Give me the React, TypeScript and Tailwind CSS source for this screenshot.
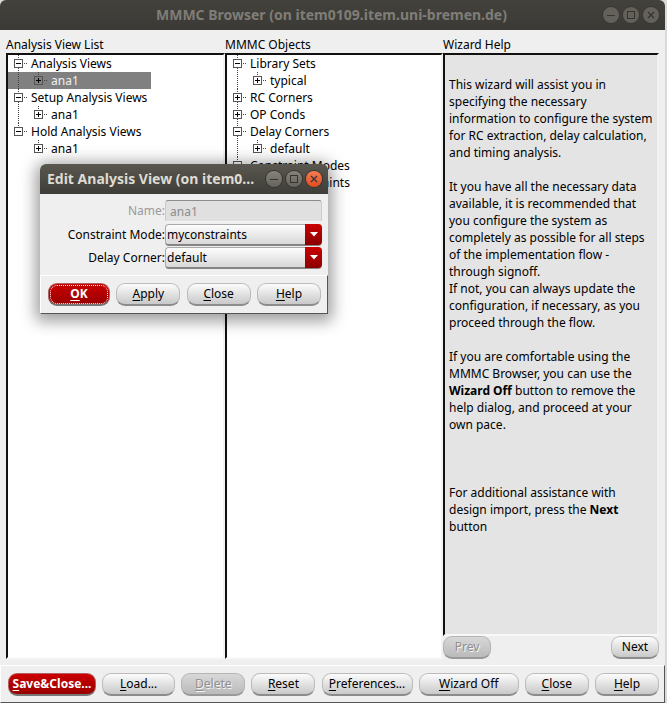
import React from 'react';

const FONT = "font-['Noto_Sans',sans-serif] text-xs";

type Node = { label: string; open?: boolean; children?: string[]; selected?: boolean };

function Branch({ open, depth, above, below }: { open?: boolean; depth: number; above: boolean; below: boolean }) {
  const c = depth === 0 ? 10 : 30;
  const dots = { stroke: '#444', strokeWidth: 1, strokeDasharray: '1 1' };
  return (
    <svg width={depth === 0 ? 23 : 43} height="17" className="shrink-0" shapeRendering="crispEdges" aria-hidden="true">
      {depth === 1 && below && <path d="M10.5 0V17" {...dots} />}
      {above && <path d={`M${c + 0.5} 0V4`} {...dots} />}
      {depth === 0 && below && <path d="M10.5 13V17" {...dots} />}
      <path d={`M${c + 6} 8.5h4`} {...dots} />
      <rect x={c - 3.5} y="4.5" width="8" height="8" fill="none" stroke="#555" />
      <path d={`M${c - 2} 8.5h5`} stroke="#000" />
      {!open && <path d={`M${c + 0.5} 6v5`} stroke="#000" />}
    </svg>
  );
}

function Tree({ nodes }: { nodes: Node[] }) {
  return (
    <ul>
      {nodes.map((n, i) => {
        const more = i < nodes.length - 1;
        return (
          <li key={n.label}>
            <div className="flex h-[17px] items-center leading-[17px]">
              <Branch depth={0} open={n.open} above below={more} />
              <span className="whitespace-nowrap">{n.label}</span>
            </div>
            {n.children && (
              <ul>
                {n.children.map((c) => (
                  <li
                    key={c}
                    className={
                      n.selected
                        ? 'flex h-[17px] w-[143px] items-center bg-[#808080] leading-[17px] text-[#f0f0f0]'
                        : 'flex h-[17px] items-center leading-[17px]'
                    }
                  >
                    <Branch depth={1} above below={more} />
                    <span className="whitespace-nowrap">{c}</span>
                  </li>
                ))}
              </ul>
            )}
          </li>
        );
      })}
    </ul>
  );
}

const views: Node[] = [
  { label: 'Analysis Views', open: true, children: ['ana1'], selected: true },
  { label: 'Setup Analysis Views', open: true, children: ['ana1'] },
  { label: 'Hold Analysis Views', open: true, children: ['ana1'] },
];

const objects: Node[] = [
  { label: 'Library Sets', open: true, children: ['typical'] },
  { label: 'RC Corners' },
  { label: 'OP Conds' },
  { label: 'Delay Corners', open: true, children: ['default'] },
  { label: 'Constraint Modes', open: true, children: ['myconstraints'] },
];

const SUNKEN = 'border-2 border-t-[#111] border-l-[#111] border-r-[#f3f3f3] border-b-[#f8f8f8]';

function Panel({ title, children }: { title: string; children: React.ReactNode }) {
  return (
    <section className="flex min-w-0 flex-col">
      <h2 className="h-[17px] leading-[17px] whitespace-nowrap">{title}</h2>
      {children}
    </section>
  );
}

function Btn({ text, mnemonic = true, kind = 'normal', className }: {
  text: string;
  mnemonic?: boolean;
  kind?: 'normal' | 'primary' | 'focused' | 'disabled';
  className: string;
}) {
  const look = {
    normal: 'border-[#bbb] border-b-[#8c8c8c] bg-linear-to-b from-[#fcfcfc] to-[#c9c9c9] text-black',
    primary: 'border-[#b06060] border-b-[#777] bg-linear-to-b from-[#cc0000] to-[#980000] font-bold text-white',
    focused:
      'border-[#b06060] border-b-[#777] bg-linear-to-b from-[#cc0000] to-[#980000] font-bold text-white outline-1 -outline-offset-3 outline-dotted outline-white',
    disabled:
      'border-[#b4b4b4] border-b-[#999] bg-linear-to-b from-[#d8d8d8] to-[#bababa] text-[#909090] [text-shadow:1px_1px_0_#f4f4f4]',
  }[kind];
  return (
    <button
      type="button"
      disabled={kind === 'disabled'}
      className={`flex h-[23px] items-center justify-center rounded-[9px] border border-b-2 whitespace-nowrap ${look} ${className}`}
    >
      <span>
        {mnemonic ? <span className="underline decoration-1 underline-offset-2">{text[0]}</span> : text[0]}
        {text.slice(1)}
      </span>
    </button>
  );
}

function WindowButtons({ active }: { active?: boolean }) {
  const circle = active
    ? 'flex size-4 items-center justify-center rounded-full bg-linear-to-b from-[#85837b] to-[#65635c] ring-1 ring-[#35342f]'
    : 'flex size-4 items-center justify-center rounded-full bg-[#63615a] ring-1 ring-[#393834]';
  const close = active
    ? 'flex size-4 items-center justify-center rounded-full bg-linear-to-b from-[#f57c54] to-[#e04b1c] ring-1 ring-[#35342f]'
    : circle;
  const svg = { width: 10, height: 10, fill: 'none', stroke: '#35342f', 'aria-hidden': true };
  return (
    <div className="flex shrink-0 gap-1">
      <button type="button" aria-label="Minimize" className={circle}>
        <svg {...svg}><path d="M1 5.5h8" /></svg>
      </button>
      <button type="button" aria-label="Maximize" className={circle}>
        <svg {...svg}><rect x="1.5" y="1.5" width="7" height="7" /></svg>
      </button>
      <button type="button" aria-label="Close window" className={close}>
        <svg {...svg}><path d="M2 2l6 6M8 2l-6 6" strokeWidth="1.3" /></svg>
      </button>
    </div>
  );
}

function Combo({ id, value }: { id: string; value: string }) {
  return (
    <div className="relative h-[23px]">
      <select
        id={id}
        className="block h-[22px] w-full appearance-none rounded-[4px] border border-b-2 border-[#aaa] border-b-[#858585] bg-linear-to-b from-[#fdfdfd] to-[#d8d8d8] pl-px text-black"
      >
        <option>{value}</option>
      </select>
      <span className="pointer-events-none absolute top-0 right-0 flex h-[21px] w-[17px] items-center justify-center rounded-r-[4px] bg-linear-to-b from-[#cc0000] to-[#8c0000]">
        <svg width="8" height="5" aria-hidden="true"><path d="M0 0h8L4 4.5z" fill="#fff" /></svg>
      </span>
    </div>
  );
}

function EditDialog() {
  return (
    <div role="dialog" aria-label="Edit Analysis View" className="absolute top-[164px] left-10 w-72 rounded-t-md shadow-[0_3px_16px_4px_rgba(0,0,0,0.4)]">
      <header className="flex h-[30px] items-center justify-between rounded-t-md bg-linear-to-b from-[#59574f] to-[#3e3d38] pr-[6px] pl-[7px]">
        <h1 className="truncate text-sm font-bold text-[#dfdbd2]">Edit Analysis View (on item0...</h1>
        <WindowButtons active />
      </header>
      <form className="bg-[#efefef]">
        <div className="grid grid-cols-[125px_1fr] pt-[6px] pr-[6px] pb-[5px]">
          <label htmlFor="name" className="text-right leading-[22px] text-[#999]">Name:</label>
          <input
            id="name"
            disabled
            value="ana1"
            readOnly
            className="mb-[2px] h-[22px] w-full min-w-0 rounded-[3px] border border-[#ccc] border-t-[#8c8c8c] border-b-[#f4f4f4] bg-[#e0e0e0] pl-1 text-[#8c8c8c]"
          />
          <label htmlFor="mode" className="text-right leading-[22px]">Constraint Mode:</label>
          <Combo id="mode" value="myconstraints" />
          <label htmlFor="corner" className="text-right leading-[22px]">Delay Corner:</label>
          <Combo id="corner" value="default" />
        </div>
        <div className="flex justify-between border border-t-white border-r-[#555] border-b-[#555] border-l-white py-[7px] pr-[6px] pl-[7px]">
          <Btn text="OK" kind="focused" className="w-[62px]" />
          <Btn text="Apply" className="w-16" />
          <Btn text="Close" className="w-16" />
          <Btn text="Help" className="w-16" />
        </div>
      </form>
    </div>
  );
}

export default function App() {
  return (
    <div className={`relative flex min-h-screen flex-col bg-[#d9d9d9] pr-[2px] text-black ${FONT}`}>
      <header className="flex h-[30px] items-center rounded-t-md bg-linear-to-b from-[#42413c] to-[#3b3a36] pr-[6px]">
        <h1 className="flex-1 pl-[60px] text-center text-sm font-bold whitespace-nowrap text-[#807d77]">
          MMMC Browser (on item0109.item.uni-bremen.de)
        </h1>
        <WindowButtons />
      </header>
      <main className="grid flex-1 grid-cols-[219fr_218fr_216fr] bg-[#efefef] px-[6px] pt-[6px] pb-[6px]">
        <Panel title="Analysis View List">
          <div className={`flex-1 bg-white ${SUNKEN}`}>
            <Tree nodes={views} />
          </div>
        </Panel>
        <Panel title="MMMC Objects">
          <div className={`flex-1 bg-white ${SUNKEN}`}>
            <Tree nodes={objects} />
          </div>
        </Panel>
        <Panel title="Wizard Help">
          <article className={`flex-1 space-y-[17px] bg-[#e4e4e4] pt-[21px] pr-[2px] pl-1 leading-[17px] ${SUNKEN}`}>
            <p>This wizard will assist you in specifying the necessary information to configure the system for RC extraction, delay calculation, and timing analysis.</p>
            <p>
              It you have all the necessary data available, it is recommended that you configure the system as completely as possible for all steps of the implementation flow - through signoff.
              <br />
              If not, you can always update the configuration, if necessary, as you proceed through the flow.
            </p>
            <p>If you are comfortable using the MMMC Browser, you can use the <b>Wizard Off</b> button to remove the help dialog, and proceed at your own pace.</p>
            <p className="pt-[34px]">For additional assistance with design import, press the <b>Next</b> button</p>
          </article>
          <div className="flex justify-between">
            <Btn text="Prev" mnemonic={false} kind="disabled" className="w-12" />
            <Btn text="Next" mnemonic={false} className="w-12" />
          </div>
        </Panel>
      </main>
      <footer className="flex justify-between border border-t-white border-r-[#555] border-b-[#555] border-l-white bg-[#efefef] pt-[7px] pr-[5px] pb-[6px] pl-[7px]">
        <Btn text="Save&Close..." kind="primary" className="w-[88px]" />
        <Btn text="Load..." className="w-[73px]" />
        <Btn text="Delete" kind="disabled" className="w-16" />
        <Btn text="Reset" className="w-16" />
        <Btn text="Preferences..." className="w-[91px]" />
        <Btn text="Wizard Off" className="w-[100px]" />
        <Btn text="Close" className="w-16" />
        <Btn text="Help" className="w-16" />
      </footer>
      <EditDialog />
    </div>
  );
}
